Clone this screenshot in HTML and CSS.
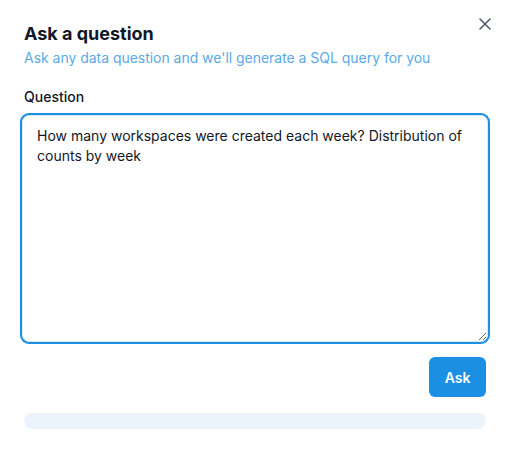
FILE: index.html
```html
<!DOCTYPE html>
<html>
<head>
<meta charset="utf-8">
<link rel="stylesheet" href="styles.css">
</head>
<body>
<div class="modal">
  <button class="close" aria-label="Close">
    <svg width="12" height="12" viewBox="0 0 12 12"><path d="M1 1L11 11M11 1L1 11" stroke="#4a5563" stroke-width="1.5" stroke-linecap="round"/></svg>
  </button>
  <h1 class="title">Ask a question</h1>
  <p class="subtitle">Ask any data question and we'll generate a SQL query for you</p>
  <label class="label" for="q">Question</label>
  <textarea id="q" class="input">How many workspaces were created each week? Distribution of counts by week</textarea>
  <div class="actions">
    <button class="ask">Ask</button>
  </div>
  <div class="bar"></div>
</div>
</body>
</html>
```
FILE: styles.css
```css
html, body {
  margin: 0;
  background: #fff;
}
body {
  font-family: Inter, "Noto Sans", sans-serif;
  color: #111827;
}
.modal {
  position: relative;
  padding: 22px 19px 0 24px;
  display: flex;
  flex-direction: column;
}
.close {
  position: absolute;
  top: 17px;
  right: 13px;
  width: 14px;
  height: 14px;
  padding: 0;
  border: 0;
  background: none;
  display: flex;
  align-items: center;
  justify-content: center;
}
.title {
  margin: 0;
  font-size: 18px;
  font-weight: 700;
  line-height: 24px;
  color: #111827;
}
.subtitle {
  margin: 2px 0 0;
  font-size: 14px;
  line-height: 20px;
  letter-spacing: -0.03px;
  color: #5aaae6;
}
.label {
  margin-top: 19px;
  font-size: 14px;
  font-weight: 500;
  line-height: 20px;
  color: #111827;
}
.input {
  margin: 8px -2px 0;
  height: 227px;
  box-sizing: border-box;
  border: 1px solid #d9e8f5;
  border-radius: 7px;
  box-shadow: 0 0 0 2px #1a8fe3;
  outline: none;
  padding: 10px 14px;
  font-family: Inter, "Noto Sans", sans-serif;
  font-size: 14px;
  line-height: 20px;
  color: #111827;
  resize: vertical;
}
.actions {
  display: flex;
  justify-content: flex-end;
  margin-top: 15px;
}
.ask {
  width: 57px;
  height: 40px;
  border: 0;
  border-radius: 6px;
  background: #1a8fe3;
  color: #fff;
  font-family: Inter, "Noto Sans", sans-serif;
  font-size: 14px;
  font-weight: 600;
}
.bar {
  margin-top: 16px;
  height: 16px;
  border-radius: 8px;
  background: #ebf4fc;
}
```
